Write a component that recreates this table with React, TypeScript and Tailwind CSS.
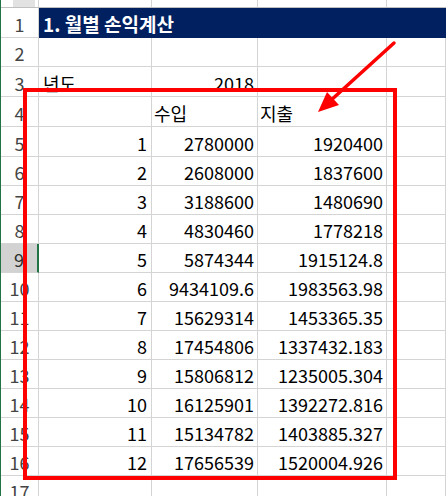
const rows: [string, string, string][] = [
  ["1", "2780000", "1920400"],
  ["2", "2608000", "1837600"],
  ["3", "3188600", "1480690"],
  ["4", "4830460", "1778218"],
  ["5", "5874344", "1915124.8"],
  ["6", "9434109.6", "1983563.98"],
  ["7", "15629314", "1453365.35"],
  ["8", "17454806", "1337432.183"],
  ["9", "15806812", "1235005.304"],
  ["10", "16125901", "1392272.816"],
  ["11", "15134782", "1403885.327"],
  ["12", "17656539", "1520004.926"],
];

const font = { fontFamily: '"Noto Sans CJK KR", "Noto Sans", sans-serif' };

const RowHead = ({ n, selected = false }: { n: number; selected?: boolean }) => (
  <div
    className={
      selected
        ? "flex items-end justify-center pb-[2px] bg-[#d2d2d2] border-r-2 border-r-[#217346] border-b border-b-[#d4d4d4] text-[#2f2f2f]"
        : "flex items-end justify-center pb-[2px] border-r border-b border-[#d4d4d4] text-[#444]"
    }
  >
    <span className="leading-[22px]">{n}</span>
  </div>
);

const Cell = ({ children, right = false, pad = "" }: { children?: React.ReactNode; right?: boolean; pad?: string }) => (
  <div
    className={`flex items-end pb-[2px] border-r border-b border-[#d4d4d4] whitespace-nowrap overflow-hidden ${
      right ? "justify-end pr-[3px]" : "justify-start pl-[2px]"
    } ${pad}`}
  >
    <span className="leading-[22px]">{children}</span>
  </div>
);

const cols = "grid grid-cols-[38px_113px_106px_129px_1fr]";

export default function App() {
  return (
    <div
      className="relative w-[446px] h-[496px] overflow-hidden bg-white text-[18px] text-black border-l border-l-[#217346]"
      style={font}
    >
      {/* column header strip */}
      <div className={`${cols} h-[8px] border-b border-[#bfbfbf]`}>
        <div className="border-r border-[#d4d4d4] flex">
          <div className="ml-[12px] w-[22px] bg-[#e2e2e2]" />
        </div>
        <div className="border-r border-[#d4d4d4]" />
        <div className="border-r border-[#d4d4d4]" />
        <div className="border-r border-[#d4d4d4]" />
        <div />
      </div>

      {/* row 1 */}
      <div className={`${cols} h-[30px]`}>
        <RowHead n={1} />
        <div className="col-span-4 bg-[#002060] flex items-end pb-[3px] pl-[4px]">
          <span className="leading-[22px] text-[19px] font-bold text-white">1. 월별 손익계산</span>
        </div>
      </div>

      {/* row 2 */}
      <div className={`${cols} h-[29px]`}>
        <RowHead n={2} />
        <Cell />
        <Cell />
        <Cell />
        <Cell />
      </div>

      {/* row 3 */}
      <div className={`${cols} h-[30px]`}>
        <RowHead n={3} />
        <Cell pad="pl-[4px]">년도</Cell>
        <Cell right>2018</Cell>
        <Cell />
        <Cell />
      </div>

      {/* row 4 */}
      <div className={`${cols} h-[30px]`}>
        <RowHead n={4} />
        <Cell />
        <Cell>수입</Cell>
        <Cell>지출</Cell>
        <Cell />
      </div>

      {rows.map((r, i) => (
        <div key={r[0]} className={`${cols} ${i === 0 ? "h-[30px]" : "h-[29px]"}`}>
          <RowHead n={i + 5} selected={i + 5 === 9} />
          <Cell right pad="pr-[4px]">{r[0]}</Cell>
          <Cell right>{r[1]}</Cell>
          <Cell right>{r[2]}</Cell>
          <Cell />
        </div>
      ))}

      {/* row 17 */}
      <div className={`${cols} h-[29px]`}>
        <RowHead n={17} />
        <Cell />
        <Cell />
        <Cell />
        <Cell />
      </div>

      {/* annotation */}
      <svg className="absolute left-0 top-0 pointer-events-none" width="446" height="496">
        <rect x="24" y="90" width="370" height="388" fill="none" stroke="#ff0000" strokeWidth="4" />
        <line x1="393" y1="43" x2="328" y2="102" stroke="#ff0000" strokeWidth="3.5" strokeLinecap="round" />
        <polygon points="317,112 326,92 338,105" fill="#ff0000" />
      </svg>
    </div>
  );
}
